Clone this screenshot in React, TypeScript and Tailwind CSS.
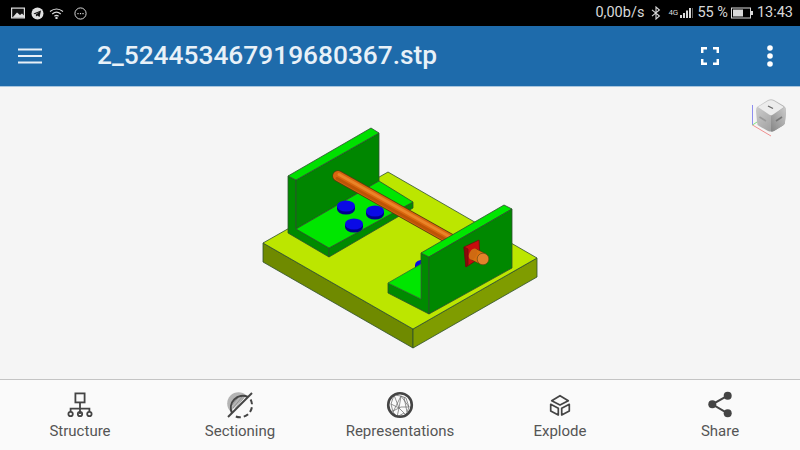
import React from "react";

const Poly = ({ p, f, s }: { p: string; f: string; s?: string }) => (
  <polygon points={p} fill={f} stroke={s ?? "#2f4f2f"} strokeWidth={0.8} strokeLinejoin="round" />
);

function Disk({ x, y, rx = 9, ry = 5.5 }: { x: number; y: number; rx?: number; ry?: number }) {
  return (
    <g>
      <path d={`M${x - rx} ${y}v3a${rx} ${ry} 0 0 0 ${rx * 2} 0v-3z`} fill="#00008c" />
      <ellipse cx={x} cy={y} rx={rx} ry={ry} fill="#0a0ae6" />
    </g>
  );
}

function Model() {
  return (
    <svg width={800} height={292} viewBox="0 87 800 292" className="block">
      {/* base plate */}
      <Poly p="263,243 263,262 413,348 413,329" f="#6f8a00" />
      <Poly p="413,329 413,348 537,277 537,258" f="#7f9c00" />
      <Poly p="263,243 388,172 537,258 413,329" f="#bce600" />

      {/* left bracket */}
      <Poly p="288,176 288,233 329,257 329,248 296,228 296,180" f="#008a00" />
      <Poly p="329,248 329,257 413,208 413,202" f="#008a00" />
      <Poly p="296,180 379,133 379,181 296,229" f="#008600" />
      <Poly p="296,229 379,181 413,202 329,248" f="#00e600" />
      <Poly p="288,176 371,128 379,133 296,180" f="#00e000" />
      <Disk x={346} y={206} />
      <Disk x={375} y={211} />
      <Disk x={354} y={224} />

      {/* rod */}
      <line x1="338" y1="176" x2="450" y2="239" stroke="#5a3c10" strokeWidth="11.5" strokeLinecap="round" />
      <line x1="338" y1="176" x2="450" y2="239" stroke="#d9660e" strokeWidth="10" strokeLinecap="round" />
      <line x1="339" y1="174.5" x2="451" y2="237.5" stroke="#ea8428" strokeWidth="3" strokeLinecap="round" />
      <line x1="337" y1="178.5" x2="449" y2="241.5" stroke="#bd5406" strokeWidth="3" strokeLinecap="round" />

      {/* right bracket */}
      <Disk x={424} y={265} />
      <Poly p="388,283 388,293 429,314 429,257 421,253 421,299" f="#008a00" />
      <Poly p="388,283 421,264 421,299" f="#00e600" s="#2f6f2f" />
      <Poly p="421,253 504,205 512,209 429,257" f="#00e600" />
      <Poly p="429,257 512,209 512,268 429,314" f="#008800" />

      {/* red block + pin */}
      <Poly p="464,247 479,240 480,258 466,267" f="#c80c0c" s="#6a1010" />
      <Poly p="464,247 468,249 468,265 466,267" f="#8f0808" s="#6a1010" />
      <line x1="473" y1="254" x2="483" y2="259" stroke="#5a4012" strokeWidth="12.4" strokeLinecap="butt" />
      <line x1="473" y1="254" x2="483" y2="259" stroke="#d9700f" strokeWidth="11.2" strokeLinecap="butt" />
      <ellipse cx="473" cy="254" rx="3.6" ry="6" fill="#cf6a12" transform="rotate(28 473 254)" />
      <circle cx="483" cy="259" r="5.8" fill="#e3822a" stroke="#6a4a14" strokeWidth="0.7" />
    </svg>
  );
}

function ViewCube() {
  return (
    <svg width={40} height={42} viewBox="0 0 40 42" className="absolute left-[749px] top-[11px] blur-[0.4px]">
      <defs>
        <linearGradient id="cubeL" x1="0" y1="0" x2="1" y2="1">
          <stop offset="0" stopColor="#d4d4d4" />
          <stop offset="1" stopColor="#8f8f8f" />
        </linearGradient>
        <linearGradient id="cubeR" x1="1" y1="0" x2="0" y2="1">
          <stop offset="0" stopColor="#cccccc" />
          <stop offset="1" stopColor="#858585" />
        </linearGradient>
      </defs>
      <line x1="3.5" y1="7" x2="3.5" y2="27" stroke="#8e8ef0" strokeWidth="1" />
      <line x1="3.5" y1="27" x2="22" y2="38" stroke="#f09090" strokeWidth="1" />
      <line x1="3.5" y1="27" x2="8" y2="24" stroke="#80e080" strokeWidth="1" />
      <path d="M8 9 L19 2 Q22 0.5 25 2 L35 8 Q37 10 37 13 L36 24 Q36 26 34 27.5 L25 33 Q22 34 19 33 L10 28 Q8 27 8 24 L7 13 Q7 10 8 9Z" fill="url(#cubeL)" />
      <path d="M22 18 L36 9 Q37 10 37 13 L36 24 Q36 26 34 27.5 L25 33 Q23.5 33.5 22 33.5Z" fill="url(#cubeR)" />
      <path d="M9 9 L19 3 Q22 1.5 25 3 L35 9 L24 16.5 Q22 18 20 16.5Z" fill="#ececec" />
      <line x1="19" y1="8" x2="24" y2="10.5" stroke="#666" strokeWidth="1.3" />
      <line x1="10.5" y1="19" x2="17" y2="23" stroke="#999" strokeWidth="1.6" />
      <line x1="27" y1="23" x2="33" y2="19" stroke="#777" strokeWidth="1.6" />
    </svg>
  );
}

function StatusBar() {
  return (
    <div className="h-[26px] bg-black flex items-center justify-between pl-[11px] pr-[7px] text-[#d8d8d8] text-[14.5px] font-['Roboto',sans-serif]">
      <div className="flex items-center gap-[6px]">
        <svg width={14} height={12} viewBox="0 0 14 12">
          <rect width="14" height="11" y="0.5" fill="#e0e0e0" />
          <rect x="1.2" y="1.7" width="11.6" height="8.6" fill="#111" />
          <path d="M1.5 10.5L6 5.5 9 8l2-1.5 2 2v2z" fill="#e0e0e0" />
        </svg>
        <svg width={13} height={13} viewBox="0 0 13 13">
          <circle cx="6.5" cy="6.5" r="6" fill="#e0e0e0" />
          <path d="M2.5 6.5L10 3.5 8.6 10 6.2 8.4 5 9.5 4.8 7.6 8.4 5 3.9 7.2z" fill="#111" />
        </svg>
        <svg width={15} height={12} viewBox="0 0 15 12" fill="none" stroke="#d8d8d8" strokeWidth="1.2" className="ml-[-1px]">
          <path d="M1 4.5Q7.5-.5 14 4.5" />
          <path d="M3.2 7Q7.5 3.4 11.8 7" />
          <path d="M5.4 9.2Q7.5 7.4 9.6 9.2" />
          <circle cx="7.5" cy="11" r="0.6" fill="#d8d8d8" />
        </svg>
        <svg width={13} height={13} viewBox="0 0 13 13" className="ml-[4px]">
          <circle cx="6.5" cy="6.5" r="5.6" fill="none" stroke="#d8d8d8" strokeWidth="1" />
          <rect x="3.4" y="6" width="1.2" height="1.2" fill="#d8d8d8" />
          <rect x="5.9" y="6" width="1.2" height="1.2" fill="#d8d8d8" />
          <rect x="8.4" y="6" width="1.2" height="1.2" fill="#d8d8d8" />
        </svg>
      </div>
      <div className="flex items-center">
        <span>0,00b/s</span>
        <svg width={10} height={14} viewBox="0 0 10 14" fill="none" stroke="#d8d8d8" strokeWidth="1.1" className="ml-[7px]">
          <path d="M1 3.8L8.4 10 5 13V1l3.4 3L1 10.2" />
        </svg>
        <span className="ml-[7px] text-[8px] w-[12px]">4G</span>
        <svg width={13} height={12} viewBox="0 0 13 12" fill="#d8d8d8">
          <rect x="0" y="8" width="2" height="3" />
          <rect x="3" y="6" width="2" height="5" />
          <rect x="6" y="3.5" width="2" height="7.5" />
          <rect x="9" y="1" width="2" height="10" />
          <rect x="12" y="1" width="1" height="10" fill="#666" />
        </svg>
        <span className="ml-[4px]">55 %</span>
        <svg width={22} height={12} viewBox="0 0 22 12" className="ml-[3px]">
          <rect x="0.5" y="1" width="19" height="10" fill="none" stroke="#d8d8d8" />
          <rect x="2" y="2.5" width="10" height="7" fill="#d8d8d8" />
          <rect x="20" y="4" width="2" height="4" fill="#d8d8d8" />
        </svg>
        <span className="ml-[4px]">13:43</span>
      </div>
    </div>
  );
}

function Header() {
  return (
    <div className="h-[61px] bg-[#1e6bab] flex items-center border-b border-[#a9c6de] font-['Roboto',sans-serif]">
      <svg width={24} height={16} viewBox="0 0 24 16" className="ml-[18px] text-[#e8f0f7]" stroke="currentColor" strokeWidth="2">
        <path d="M0 1.5H24M0 8H24M0 14.5H24" />
      </svg>
      <div className="ml-[55px] text-[26.3px] font-medium text-[#e8f1f8] leading-none mt-[-2px] flex-1">2_524453467919680367.stp</div>
      <svg width={18} height={18} viewBox="0 0 18 18" fill="none" stroke="#fff" strokeWidth="2.5" className="mr-[48px]">
        <path d="M1.2 6V1.2H6M12 1.2h4.8V6M16.8 12v4.8H12M6 16.8H1.2V12" />
      </svg>
      <svg width={6} height={22} viewBox="0 0 6 22" fill="#fff" className="mr-[27px]">
        <circle cx="3" cy="3" r="2.8" />
        <circle cx="3" cy="11" r="2.8" />
        <circle cx="3" cy="19" r="2.8" />
      </svg>
    </div>
  );
}

const ic = { width: 30, height: 30, viewBox: "0 0 30 30", fill: "none", stroke: "#444", strokeWidth: 1.8 };

const StructureIcon = () => (
  <svg {...ic}>
    <rect x="10.4" y="3.4" width="9.2" height="9" />
    <path d="M15 12.4V24M5.6 22v-3.4h18.8V22" />
    <circle cx="5.6" cy="24" r="2.2" />
    <circle cx="15" cy="24" r="2.2" />
    <circle cx="24.4" cy="24" r="2.2" />
  </svg>
);

const SectioningIcon = () => (
  <svg {...ic} strokeWidth={2}>
    <path d="M5.5 21.5A11 11 0 0 1 21.5 5.5Z" fill="#b4b4b4" stroke="none" />
    <path d="M6 16l8-9.5M8 18l9.5-11.5M10 18.5l9-11" stroke="#777" strokeWidth="0.6" />
    <path d="M7 23A12 12 0 0 1 23 7" />
    <path d="M25.6 9.5A12 12 0 0 1 9 25.6" strokeDasharray="5 3" />
    <path d="M3 27L27 3" />
  </svg>
);

const RepresentationsIcon = () => (
  <svg {...ic}>
    <path d="M9 5L6 14l2 8 4 5 2-9-5-13 7 1-2 12 7 7 3-8-8-11 5 2 3 9-8 0-8 4M6 14l8 4M16 6l-8 16M12 27l7-4M19 7l3 15" stroke="#666" strokeWidth="0.7" />
    <circle cx="15" cy="15" r="11.8" strokeWidth="2.6" />
  </svg>
);

const ExplodeIcon = () => (
  <svg {...ic} strokeWidth={1.7} strokeLinejoin="round">
    <path d="M15 5.7L23.3 10.7 15 15 6.7 10.7Z" />
    <path d="M5.7 14.3L13.3 18.3V25L5.7 21Z" />
    <path d="M24.3 14.3L16.7 18.3V25L24.3 21Z" />
  </svg>
);

const ShareIcon = () => (
  <svg {...ic} strokeWidth={2}>
    <path d="M22.7 5.7L7.3 14.3 22.7 23.3" />
    <circle cx="22.7" cy="5.7" r="4" fill="#444" stroke="none" />
    <circle cx="7.3" cy="14.3" r="4" fill="#444" stroke="none" />
    <circle cx="22.7" cy="23.3" r="4" fill="#444" stroke="none" />
  </svg>
);

const items = [
  { label: "Structure", Icon: StructureIcon },
  { label: "Sectioning", Icon: SectioningIcon },
  { label: "Representations", Icon: RepresentationsIcon },
  { label: "Explode", Icon: ExplodeIcon },
  { label: "Share", Icon: ShareIcon },
];

function BottomNav() {
  return (
    <div className="h-[71px] bg-[#fafafa] border-t border-[#c4c4c4] grid grid-cols-5 pt-[10px] font-['Roboto',sans-serif]">
      {items.map(({ label, Icon }) => (
        <div key={label} className="flex flex-col items-center">
          <Icon />
          <span className="text-[15px] leading-[20px] text-[#555] mt-[1px]">{label}</span>
        </div>
      ))}
    </div>
  );
}

export default function App() {
  return (
    <div className="w-[800px] h-[450px] flex flex-col overflow-hidden bg-[#f5f5f5]">
      <StatusBar />
      <Header />
      <div className="relative flex-1">
        <Model />
        <ViewCube />
      </div>
      <BottomNav />
    </div>
  );
}
